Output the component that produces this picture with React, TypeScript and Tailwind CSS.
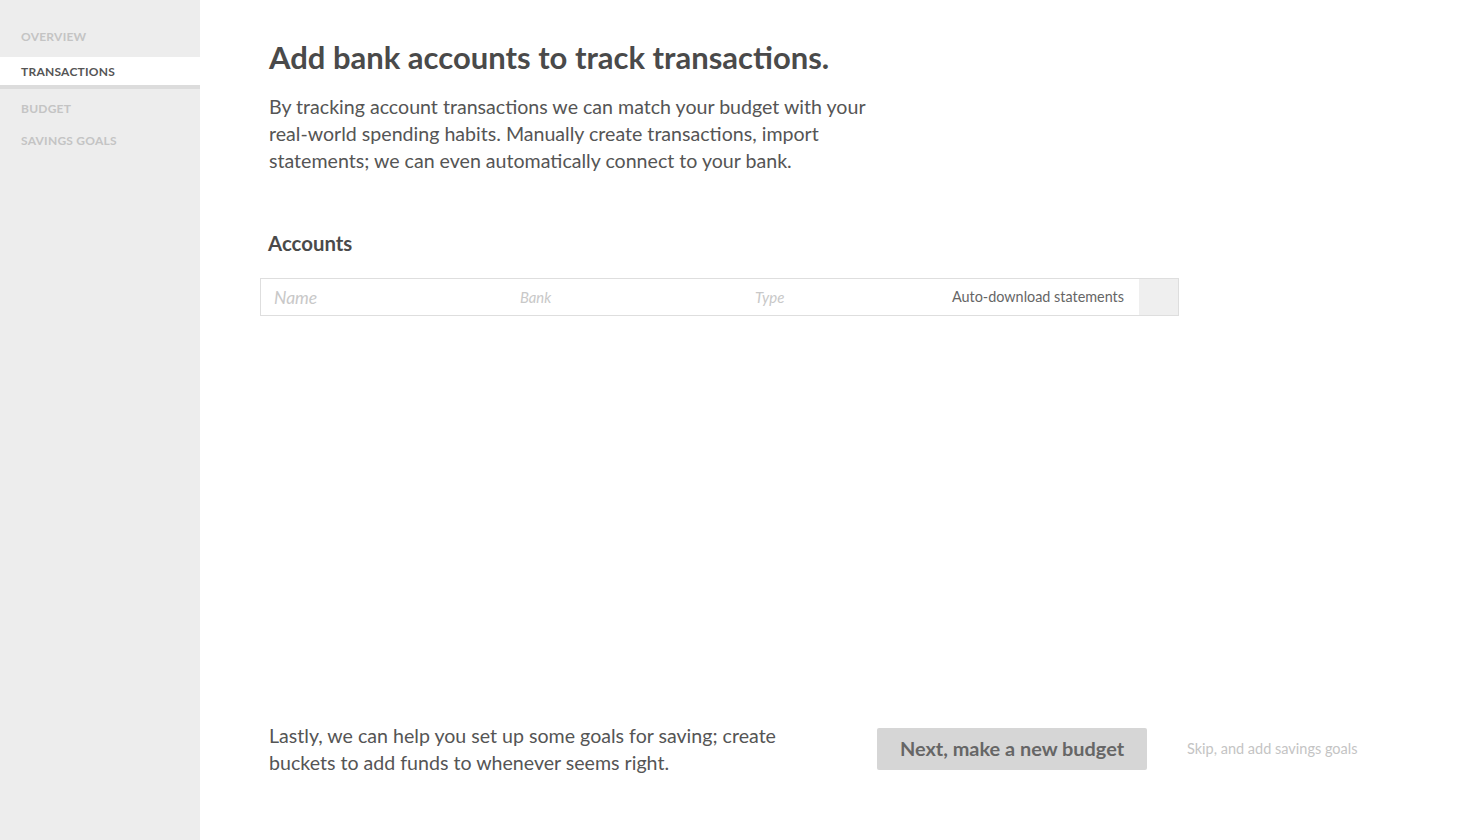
import React from "react";

export default function App() {
  const font = { fontFamily: "Lato, 'Noto Sans', sans-serif" };
  return (
    <div className="flex h-[840px] w-[1460px] bg-white text-[#555]" style={font}>
      <aside className="flex w-[200px] shrink-0 flex-col bg-[#ededed] pt-[29px] text-[12px] font-bold tracking-[0.02em]">
        <div className="h-[28px] pl-[21px] leading-[16px] text-[#c4c4c4]">OVERVIEW</div>
        <div className="h-[32px] border-b-[4px] border-[#dcdcdc] bg-white pl-[21px] leading-[29px] text-[#555]">TRANSACTIONS</div>
        <div className="h-[33px] pl-[21px] pt-[12px] leading-[16px] text-[#c4c4c4]">BUDGET</div>
        <div className="pl-[21px] pt-[11px] leading-[16px] text-[#c4c4c4]">SAVINGS GOALS</div>
      </aside>
      <main className="flex min-w-0 flex-1 flex-col pl-[60px] pr-[281px]">
        <h1 className="mt-[37px] pl-[9px] text-[31px] font-bold leading-[40px] text-[#4a4a4a]">
          Add bank accounts to track transactions.
        </h1>
        <p className="mt-[16px] w-[620px] pl-[9px] text-[19.6px] leading-[27px] text-[#555]">
          By tracking account transactions we can match your budget with your real-world spending habits. Manually create transactions, import statements; we can even automatically connect to your bank.
        </p>
        <h2 className="mt-[56px] pl-[8px] text-[20.4px] font-bold leading-[26px] text-[#4a4a4a]">Accounts</h2>
        <div className="mt-[22px] flex h-[38px] items-stretch border border-[#dedede] text-[13px]">
          <div className="flex w-[245px] items-center pl-[13px] pt-[2px] text-[17.5px] italic text-[#c8c8c8]">Name</div>
          <div className="flex w-[235px] items-center pl-[14px] text-[14.8px] italic text-[#c8c8c8]">Bank</div>
          <div className="flex flex-1 items-center pl-[14px] text-[15px] italic text-[#c8c8c8]">Type</div>
          <div className="flex items-center pr-[15px] text-[14.4px] text-[#666]">Auto-download statements</div>
          <div className="w-[39px] bg-[#efefef]"></div>
        </div>
        <div className="flex-1"></div>
        <div className="mb-[64px] flex items-center">
          <p className="w-[617px] shrink-0 pl-[9px] pr-[40px] text-[19.6px] leading-[27px] text-[#555]">
            Lastly, we can help you set up some goals for saving; create buckets to add funds to whenever seems right.
          </p>
          <button className="h-[42px] w-[270px] shrink-0 rounded-[2px] bg-[#d6d6d6] text-[19.9px] font-bold text-[#666]">
            Next, make a new budget
          </button>
          <span className="ml-[40px] whitespace-nowrap text-[14.5px] text-[#c4c4c4]">Skip, and add savings goals</span>
        </div>
      </main>
    </div>
  );
}
